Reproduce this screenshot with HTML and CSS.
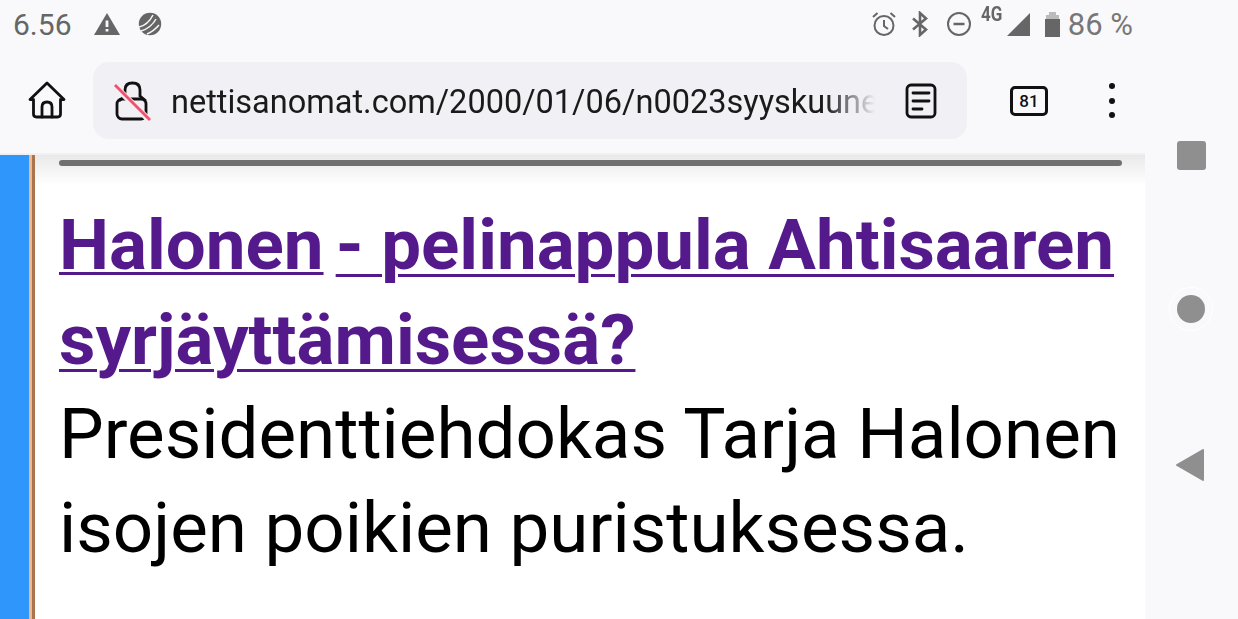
FILE: index.html
```html
<!DOCTYPE html>
<html lang="en">
<head>
    <meta charset="UTF-8">
    <title>Halonen - pelinappula Ahtisaaren syrjäyttämisessä?</title>
    <link rel="stylesheet" href="styles.css">
</head>
<body>
    <div class="screen">
        <div class="main">
            <div class="status">
                <div class="status-left">
                    <span class="time">6.56</span>
                    <svg class="warn" width="28" height="24" viewBox="0 0 28 24"><path fill="#666" fill-rule="evenodd" d="M14 1 L27 23 H1 Z M12.6 8.5 V15 H15.4 V8.5 Z M12.6 17 V19.6 H15.4 V17 Z"/></svg>
                    <svg class="sync" width="24" height="24" viewBox="0 0 24 24"><circle cx="12" cy="12" r="11.200" fill="#666"/><path d="M1 15 Q10 13 15 3 M3 19 Q13 16 18 7 M9 22 Q16 19 21 13" stroke="#f9f9fb" stroke-width="1.500" fill="none"/></svg>
                </div>
                <div class="status-right">
                    <svg class="alarm" width="26" height="26" viewBox="0 0 26 26" fill="none" stroke="#666" stroke-width="2"><circle cx="13" cy="14.500" r="9.500"/><path d="M13 9 V15 L17 18 M2 6 L6.500 2 M24 6 L19.500 2"/></svg>
                    <svg class="bt" width="18" height="26" viewBox="0 0 18 26" fill="none" stroke="#666" stroke-width="2.600"><path d="M2 7.500 L15 18.500 L9 24 V2 L15 7.500 L2 18.500"/></svg>
                    <svg class="dnd" width="26" height="26" viewBox="0 0 26 26" fill="none" stroke="#666" stroke-width="2"><circle cx="13" cy="13" r="11"/><path d="M7.500 13 H18.500" stroke-width="2.500"/></svg>
                    <span class="net">4G</span>
                    <svg class="signal" width="23" height="23" viewBox="0 0 23 23"><path fill="#666" d="M23 0 V23 H0 Z"/></svg>
                    <svg class="battery" width="15" height="25" viewBox="0 0 15 25"><path fill="#bbb" d="M4 0 H11 V3 H4 Z M1 3 H14 V9 H1 Z"/><path fill="#666" d="M0 7 H15 V25 H0 Z"/></svg>
                    <span class="percent">86 %</span>
                </div>
            </div>
            <div class="toolbar">
                <svg class="home" width="38" height="38" viewBox="0 0 38 38" fill="none" stroke="#111" stroke-width="2.800" stroke-linejoin="round" stroke-linecap="round"><path d="M2 18.500 L19 2 L36 18.500 H32.500 V33 Q32.500 36 29.500 36 H8.500 Q5.500 36 5.500 33 V18.500 Z"/><path d="M14 36 V26 Q14 21 19 21 Q24 21 24 26 V36"/></svg>
                <div class="urlbar">
                    <span class="lock">
                        <svg width="38" height="40" viewBox="0 0 38 40" fill="none"><path d="M11 18 V9 Q11 2 18.500 2 Q26 2 26 9 V15 L32 20 M11 15 L5 20" stroke="#111" stroke-width="2.800"/><rect x="3" y="18" width="29" height="20" rx="5" stroke="#111" stroke-width="2.800"/><path d="M1 5 L36 40" stroke="#f0f0f5" stroke-width="6"/><path d="M1 4 L36 39" stroke="#f4506a" stroke-width="2.800"/></svg>
                    </span>
                    <span class="url">nettisanomat.com/2000/01/06/n0023syyskuune</span>
                    <svg class="reader" width="32" height="36" viewBox="0 0 32 36" fill="none" stroke="#111" stroke-width="2.800" stroke-linecap="round"><rect x="2" y="2" width="28" height="32" rx="4"/><path d="M8 10 H24 M8 18 H24 M8 26 H17"/></svg>
                </div>
                <div class="tabs">81</div>
                <div class="menu"><i></i><i></i><i></i></div>
            </div>
            <div class="content">
                <div class="side-blue"></div>
                <div class="side-light"></div>
                <div class="side-brown"></div>
                <div class="article">
                    <div class="rule"></div>
                    <h1><a class="first" href="#">Halonen</a> <a class="second" href="#">- pelinappula Ahtisaaren syrjäyttämisessä?</a></h1>
                    <p>Presidenttiehdokas Tarja Halonen isojen poikien puristuksessa.</p>
                </div>
            </div>
        </div>
        <div class="nav">
            <div class="nav-square"></div>
            <div class="nav-ring"><div class="nav-circle"></div></div>
            <svg class="nav-back" width="28" height="32" viewBox="0 0 28 32"><path fill="#8f8f8f" stroke="#8f8f8f" stroke-width="2" stroke-linejoin="round" d="M27 1 V31 L1 16 Z"/></svg>
        </div>
    </div>
</body>
</html>
```

FILE: styles.css
```css
body {
    margin: 0;
    font-family: Roboto, sans-serif;
    background-color: #f9f9fb;
}
.screen {
    display: flex;
    width: 1238px;
    height: 619px;
    overflow: hidden;
}
.main {
    width: 1145px;
    display: flex;
    flex-direction: column;
}
.status {
    height: 50px;
    display: flex;
    justify-content: space-between;
    align-items: center;
    padding: 0 12px 2px 13px;
    box-sizing: border-box;
    color: #666;
}
.status-left,
.status-right {
    display: flex;
    align-items: center;
}
.time {
    font-size: 30px;
    margin-right: 21px;
}
.warn {
    margin-right: 17px;
}
.alarm {
    margin-right: 14px;
}
.bt {
    margin-right: 17px;
}
.dnd {
    margin-right: 9px;
}
.net {
    font-size: 20px;
    font-weight: 700;
    margin: -20px 1px 0 0;
    transform: scaleX(0.85);
    transform-origin: left;
    width: 25px;
}
.signal {
    margin-right: 15px;
}
.battery {
    margin-right: 8px;
}
.percent {
    font-size: 31px;
    color: #777;
}
.toolbar {
    height: 105px;
    display: flex;
    align-items: flex-start;
    padding: 12px 0 0 28px;
    box-sizing: border-box;
    border-bottom: 2px solid #f1f1f3;
}
.home {
    margin: 19px 27px 0 0;
}
.urlbar {
    width: 874px;
    height: 77px;
    background-color: #f0f0f5;
    border-radius: 16px;
    display: flex;
    align-items: center;
    box-sizing: border-box;
    padding-left: 21px;
}
.lock {
    width: 57px;
    height: 40px;
}
.url {
    width: 704px;
    margin-top: 2px;
    font-size: 32.500px;
    color: #1a1a1a;
    white-space: nowrap;
    overflow: hidden;
    -webkit-mask-image: linear-gradient(to right, #000 93%, transparent);
    mask-image: linear-gradient(to right, #000 93%, transparent);
}
.reader {
    margin-left: 30px;
}
.tabs {
    width: 38px;
    height: 30px;
    margin: 24px 0 0 43px;
    border: 3px solid #111;
    border-radius: 5px;
    box-sizing: border-box;
    font-size: 17px;
    font-weight: 500;
    color: #111;
    display: flex;
    align-items: center;
    justify-content: center;
}
.menu {
    display: flex;
    flex-direction: column;
    gap: 8.500px;
    margin: 21px 0 0 61px;
}
.menu i {
    width: 6px;
    height: 6px;
    border-radius: 50%;
    background-color: #111;
}
.content {
    flex: 1;
    display: flex;
    background-color: #fff;
    overflow: hidden;
}
.side-blue {
    width: 29px;
    background-color: #2f96fb;
}
.side-light {
    width: 3px;
    background-color: #efb98a;
}
.side-brown {
    width: 3px;
    background-color: #a9754f;
}
.article {
    flex: 1;
    padding: 5px 23px 0 24px;
    background: linear-gradient(#e9e9e9, #fff 30px);
}
.rule {
    height: 6px;
    background-color: #707070;
    border-radius: 3px;
}
h1 {
    margin: 31px 0 0;
    font-size: 70.900px;
    line-height: 95px;
    font-weight: 700;
}
h1 a {
    color: #541a8b;
    text-decoration-thickness: 3px;
}
.first {
    text-underline-offset: 3px;
}
.second {
    margin-left: -5.500px;
    text-underline-offset: 5px;
}
p {
    margin: 0;
    font-size: 70.900px;
    line-height: 94px;
    color: #000;
}
.nav {
    width: 93px;
    display: flex;
    flex-direction: column;
    align-items: center;
    padding-top: 141px;
    box-sizing: border-box;
}
.nav-square {
    width: 29px;
    height: 29px;
    background-color: #8f8f8f;
    border-radius: 3px;
    margin-bottom: 117px;
}
.nav-ring {
    width: 42px;
    height: 42px;
    border-radius: 50%;
    border: 1px solid #fff;
    display: flex;
    align-items: center;
    justify-content: center;
    margin-bottom: 118px;
    margin-left: -2px;
}
.nav-circle {
    width: 28px;
    height: 28px;
    border-radius: 50%;
    background-color: #8f8f8f;
}
.nav-back {
    margin-left: -4px;
}
```
